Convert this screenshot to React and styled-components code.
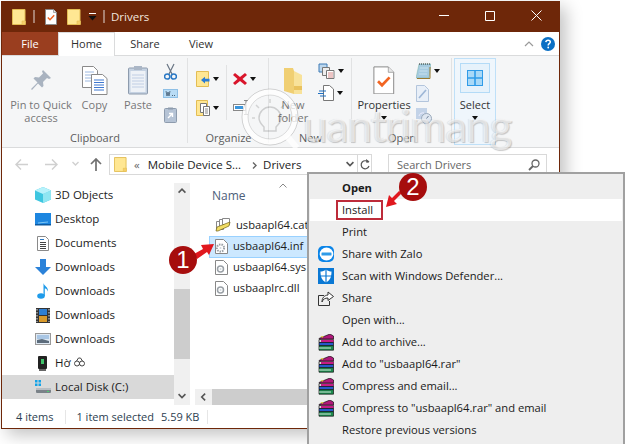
import React from "react";
import styled, { createGlobalStyle } from "styled-components";

const Global = createGlobalStyle`
  html, body { margin: 0; padding: 0; background: #fff; }
  body { font-family: "Open Sans", "Liberation Sans", sans-serif; font-size: 11px; color: #1c1c1c; }
`;

const Stage = styled.div`
  position: relative; width: 626px; height: 444px; overflow: hidden; background: #fff;
`;
const Win = styled.div`
  margin: 1px 0 0 1px; width: 559px; height: 428px; box-sizing: border-box;
  border: 1px solid #6e2709; border-top: 0; background: #fff;
  display: flex; flex-direction: column;
  box-shadow: 6px 6px 16px rgba(0,0,0,.24);
`;

/* title bar */
const TitleBar = styled.div`
  height: 31px; flex: none; background: #6e2709; display: flex; align-items: center; color: #f2e6df;
  font-size: 11.5px; padding-left: 10px;
`;
const TitleSlot = styled.span`display: inline-flex; margin-left: ${p => p.$ml || 0}px;`;
const TitleSep = styled.span`width: 2px; height: 13px; background: #a8806f; margin-left: ${p => p.$ml}px;`;
const TitleText = styled.span`margin-left: 6px;`;
const Controls = styled.div`margin-left: auto; display: flex; padding-bottom: 2px;`;
const Ctl = styled.span`width: 46px; height: 20px; display: flex; align-items: center; justify-content: center;`;

/* tabs */
const Tabs = styled.div`
  height: 24px; flex: none; box-sizing: border-box; display: flex; border-bottom: 1px solid #dadbdc; background: #fff;
`;
const FileTab = styled.div`
  width: 56px; background: #9a3e1f; color: #fff; text-align: center; line-height: 23px; height: 23px;
`;
const Tab = styled.div`
  width: ${p => p.$w}px; text-align: center; line-height: 23px; height: ${p => p.$active ? 24 : 23}px;
  box-sizing: border-box; color: #303030; background: #fff; ${p => p.$active && `border: 1px solid #dadbdc; border-bottom: 0; line-height: 22px;`}
`;
const TabRight = styled.div`margin-left: auto; display: flex; align-items: center; gap: 7px; padding-right: 4px;`;

/* ribbon */
const Ribbon = styled.div`
  height: 92px; flex: none; box-sizing: border-box; background: #f5f6f7; border-bottom: 1px solid #dadbdc; display: flex;
`;
const Group = styled.div`
  width: ${p => p.$w}px; flex: none; box-sizing: border-box; display: flex; flex-direction: column; position: relative;
  &::after { content: ""; position: absolute; right: 0; top: 2px; bottom: 4px; width: 1px; background: #e1e2e3; }
`;
const GroupBody = styled.div`flex: 1; display: flex; padding-left: ${p => p.$pl || 0}px;`;
const GroupLabel = styled.div`height: 20px; line-height: 22px; text-align: center; color: #5c5c5c; flex: none;`;
const Big = styled.div`
  width: ${p => p.$w}px; flex: none; display: flex; flex-direction: column; align-items: center; padding-top: 6px;
  color: ${p => p.$dim ? "#777" : "#333"}; line-height: 13px; text-align: center;
`;
const BigIcon = styled.div`height: 36px; display: flex; align-items: center; justify-content: center; flex: none;`;
const Stack = styled.div`
  display: flex; flex-direction: column; width: ${p => p.$w}px; flex: none;
  align-items: ${p => p.$center ? "center" : "flex-start"};
  padding-top: ${p => p.$pt}px; gap: ${p => p.$gap}px; margin-left: ${p => p.$ml || 0}px;
`;
const Small = styled.div`display: flex; align-items: center; gap: 3px; height: ${p => p.$h}px;`;
const Caret = styled.span`
  width: 0; height: 0; border: 3.5px solid transparent; border-top: 4px solid #111; border-bottom: 0; flex: none; display: inline-block;
  margin-top: ${p => p.$mt || 0}px;
`;
const VDiv = styled.div`width: 1px; height: 55px; background: #e1e2e3; margin: 9px 6px 0 4px; flex: none;`;
const SelectGroup = styled.div`
  width: 42px; margin: 2px 0 2px 2px; box-sizing: border-box; background: #eff6fc; border: 1px solid #bfe0f8;
  display: flex; flex-direction: column; align-items: center; padding-top: 4px; line-height: 13px; color: #333; flex: none;
`;
const SelectTile = styled.div`
  width: 30px; height: 30px; box-sizing: border-box; border: 1px solid #b3dbf7; background: #e6f2fb;
  display: flex; align-items: center; justify-content: center; margin-bottom: 5px;
`;

/* nav */
const Nav = styled.div`height: 35px; flex: none; display: flex; align-items: flex-start; padding: 6px 0 0 4px; box-sizing: border-box;`;
const NavBtn = styled.span`width: ${p => p.$w}px; height: 21px; display: flex; align-items: center; justify-content: center; flex: none;`;
const Address = styled.div`
  width: 263px; height: 21px; box-sizing: border-box; border: 1px solid #d9d9d9; margin-left: 1px; display: flex; align-items: center;
  padding-left: 4px; flex: none; color: #222; font-size: 11.5px;
`;
const Crumb = styled.span`margin-left: ${p => p.$ml}px; white-space: nowrap; color: ${p => p.$c || "inherit"};`;
const AddrEnd = styled.div`
  margin-left: auto; display: flex; align-items: center; height: 100%;
`;
const RefreshCell = styled.span`
  width: 13px; height: 100%; border-left: 1px solid #d9d9d9; display: flex; align-items: center; justify-content: center; margin-left: 3px;
`;
const Search = styled.div`
  width: 159px; height: 21px; margin-left: 16px; box-sizing: border-box; border: 1px solid #d9d9d9; display: flex; align-items: center;
  padding: 0 6px 0 8px; justify-content: space-between; color: #666; flex: none;
`;

/* main */
const Main = styled.div`flex: 1; display: flex; min-height: 0;`;
const Side = styled.div`width: 172px; flex: none; display: flex; flex-direction: column;`;
const SideItem = styled.div`
  height: 24px; flex: none; display: flex; align-items: center; padding-left: 32px; box-sizing: border-box;
  background: ${p => p.$on ? "#d9d9d9" : "transparent"}; color: #1c1c1c; font-size: 11.5px;
`;
const SideLabel = styled.span`position: relative; top: -1px; display: inline-flex; align-items: center; gap: 3px;`;
const SideIcon = styled.span`width: 17px; height: 18px; margin-right: 4px; display: flex; align-items: center; justify-content: center; flex: none;`;
const VScroll = styled.div`width: 16px; flex: none; background: #f0f0f0; display: flex; flex-direction: column; align-items: center;`;
const ScrollEnd = styled.span`height: 17px; flex: none; display: flex; align-items: center; justify-content: center;`;
const Track = styled.div`flex: 1; align-self: stretch; padding-top: 89px;`;
const Thumb = styled.div`height: 70px; background: #cdcdcd;`;
const Files = styled.div`flex: 1; min-width: 0; display: flex; flex-direction: column;`;
const FilesHead = styled.div`height: 32px; flex: none; display: flex; padding-left: 22px; color: #4c607a; line-height: 25px; font-size: 12px;`;
const SortMark = styled.span`margin: 0 0 0 33px; height: 8px; display: flex;`;
const FileRow = styled.div`
  height: ${p => p.$on ? 22 : 21}px; width: 120px; margin-left: 19px; display: flex; align-items: center; gap: 5px; padding: 0 0 ${p => p.$on ? 0 : 0}px 6px; box-sizing: border-box; flex: none;
  font-size: 11.2px; color: #1c1c1c; white-space: nowrap;
  margin-top: ${p => p.$on ? -0.5 : 0}px; margin-bottom: ${p => p.$on ? -0.5 : 0}px;
  background: ${p => p.$on ? "#cce8ff" : "transparent"}; box-shadow: ${p => p.$on ? "inset 0 0 0 1px #99d1ff" : "none"};
`;
const FileName = styled.span`position: relative; top: -1px;`;
const HScroll = styled.div`margin: auto 0 0 5px; height: 16px; background: #f0f0f0; display: flex; flex: none;`;
const HEnd = styled.span`width: 17px; flex: none; display: flex; align-items: center; justify-content: center;`;
const HThumb = styled.div`flex: 1; background: #cdcdcd;`;
const Status = styled.div`height: 23px; flex: none; display: flex; align-items: center; padding-left: 14px; color: #2c3e50; white-space: nowrap;`;
const StatusSep = styled.span`width: 1px; height: 14px; background: #e6e6e6; margin: 0 ${p => p.$r}px 0 ${p => p.$l}px;`;
const StatusSize = styled.span`margin-left: 7px;`;

/* overlays */
const Menu = styled.div`
  position: absolute; left: 307px; top: 172px; width: 318px; height: 300px; box-sizing: border-box;
  border: 2px solid #a0a0a0; background: #eeeeee; padding: 3px 1px 0; z-index: 3;
`;
const MenuRow = styled.div`
  height: 22px; display: flex; align-items: center; padding-left: 7px; position: relative; white-space: nowrap; color: #1a1a1a;
  background: ${p => p.$on ? "#fff" : "transparent"}; font-weight: ${p => p.$bold ? 700 : 400}; font-size: 11.2px;
`;
const MenuLabel = styled.span`position: relative; top: -1px;`;
const MenuIcon = styled.span`width: 18px; height: 18px; display: flex; align-items: center; justify-content: center; margin-right: 7px; flex: none;`;
const InstallBox = styled.span`
  position: absolute; left: 26px; top: 1px; width: 47px; height: 20px; box-sizing: border-box; border: 2px solid #bd2b3a;
`;
const Badge = styled.div`
  position: absolute; left: ${p => p.$x - 14}px; top: ${p => p.$y - 14}px; width: 28px; height: 28px; border-radius: 50%;
  background: #a60d0d; color: #fff; font: 400 24px/28px "Liberation Sans", sans-serif; text-align: center; z-index: 5;
`;
const Arrow = styled.svg`position: absolute; left: 0; top: 0; z-index: 4; pointer-events: none;`;
const Watermark = styled.div`position: absolute; left: 241px; top: 86px; z-index: 2; pointer-events: none; display: flex; align-items: flex-start;`;
const WmText = styled.span`
  font: 400 44px/48px Lato, sans-serif; color: rgba(255,255,255,.6); margin: 15px 0 0 2px; letter-spacing: -1px;
  text-shadow: 1px 1px 1px rgba(0,0,0,.2), -1px 0 1px rgba(0,0,0,.08);
`;

/* icons */
const Folder = ({ w = 14, h = 16 }) => (
  <svg width={w} height={h} viewBox="0 0 14 16">
    <path d="M.5.5h12.5v15H.5z" fill="#ffe793" stroke="#e3bd54" />
    <path d="M10 12h3.500v3.500H10z" fill="#f5cf6a" stroke="#e3bd54" strokeWidth=".6" />
  </svg>
);
const CheckDoc = ({ s = 1, color = "#f26522" }) => (
  <svg width={12 * s} height={16 * s} viewBox="0 0 12 16">
    <path d="M.5.5h8l3 3v12H.5z" fill="#fff" stroke="#8a8a8a" strokeWidth={1 / s} />
    <path d="M8.500.5v3h3" fill="#e8e8e8" stroke="#8a8a8a" strokeWidth={.7 / s} />
    <path d="M2.800 8.500l2.200 2.200 4.200-4.400" fill="none" stroke={color} strokeWidth={1.5} />
  </svg>
);
const Pin = () => (
  <svg width="22" height="22" viewBox="0 0 22 22"><path d="M13 1l8 8-2 1-2-1-4 4 .5 4-1.500 1.500-4-4L2 21l-1-1 6.500-6.500-4-4L5 8l4 .5 4-4-1-2z" fill="#a9b3c0" /></svg>
);
const CopyIcon = () => (
  <svg width="26" height="29" viewBox="0 0 26 29">
    <path d="M.5.5h11l4 4v17H.5z" fill="#fff" stroke="#8a8a8a" />
    <path d="M3 6h9M3 9h9M3 12h9M3 15h6" stroke="#9cb8e0" />
    <path d="M9.500 8.500h11l4.500 4v16H9.500z" fill="#fff" stroke="#8a8a8a" />
    <path d="M12 14h10M12 16.500h10M12 19h10M12 21.500h10M12 24h10" stroke="#3f78d0" />
  </svg>
);
const PasteIcon = () => (
  <svg width="20" height="30" viewBox="0 0 20 30">
    <rect x=".5" y="3" width="19" height="26" rx="1" fill="#c5d2e2" stroke="#8d9bad" />
    <rect x="2.500" y="6" width="15" height="21" fill="#eef2f7" />
    <path d="M4 10h12M4 13h12M4 16h12M4 19h12M4 22h12" stroke="#c0cee4" />
    <rect x="6" y="1" width="8" height="4" fill="#aab6c6" />
  </svg>
);
const Scissors = () => (
  <svg width="13" height="17" viewBox="0 0 13 17" fill="none">
    <path d="M3 1l5 10M10 1L5 11" stroke="#6a7685" strokeWidth="1.200" />
    <circle cx="3.200" cy="13.500" r="2.600" stroke="#2a78c4" strokeWidth="1.500" />
    <circle cx="9.800" cy="13.500" r="2.600" stroke="#2a78c4" strokeWidth="1.500" />
  </svg>
);
const PathIcon = () => (
  <svg width="15" height="9" viewBox="0 0 15 9">
    <rect x=".5" y=".5" width="14" height="8" fill="#b9dcf5" stroke="#8fc0e6" />
    <path d="M3 2l1 5 1-4 1 4 1-5" stroke="#33495f" strokeWidth=".7" fill="none" />
    <path d="M9 6.500h.8M11 6.500h.8" stroke="#33495f" />
  </svg>
);
const ShortcutIcon = () => (
  <svg width="13" height="16" viewBox="0 0 13 16">
    <rect x=".5" y="1.500" width="12" height="14" rx="1" fill="#b5c3d5" stroke="#8d9bad" />
    <rect x="4" y=".5" width="5" height="2" fill="#8d9bad" />
    <path d="M4 11l4-4M5 6.500h3.500V10" stroke="#fff" strokeWidth="1.400" fill="none" />
  </svg>
);
const MoveTo = () => (
  <svg width="14" height="16" viewBox="0 0 14 16">
    <path d="M.5.5h12v15H.5z" fill="#ffe793" stroke="#e3bd54" />
    <path d="M5 9l4-3.200v2H13.500v2.600H9v2z" fill="#2b7cd3" />
  </svg>
);
const CopyTo = () => (
  <svg width="14" height="16" viewBox="0 0 14 16">
    <path d="M.5.5h11v15H.5z" fill="#ffe793" stroke="#e3bd54" />
    <path d="M4.500 3.500h6v9h-6z" fill="#fff" stroke="#777" />
    <path d="M7.500 6.500h6v9h-6z" fill="#fff" stroke="#777" />
    <path d="M9 9h3M9 11h3M9 13h3" stroke="#8a8a8a" />
  </svg>
);
const Delete = () => (
  <svg width="14" height="14" viewBox="0 0 14 14"><path d="M2 1l5 4 5-4 2 2-4.500 4 4.500 4-2 2-5-4-5 4-2-2 4.500-4L0 3z" fill="#d9152b" /></svg>
);
const Rename = () => (
  <svg width="17" height="15" viewBox="0 0 17 15">
    <rect x=".5" y="4.500" width="12" height="6" fill="#fff" stroke="#888" />
    <rect x="2" y="6" width="8" height="3" fill="#3a96dd" />
    <path d="M11 .5h4M13 .5v14M11 14.500h4" stroke="#888" fill="none" />
  </svg>
);
const BigFolder = () => (
  <svg width="20" height="28" viewBox="0 0 20 28">
    <path d="M1 2h9l1 3v23L1 25z" fill="#f0cf73" />
    <path d="M1 2l10 3v23H19V9L11 5z" fill="#f8e29a" />
    <path d="M11 20h8v4h-8z" fill="#e9c25e" />
  </svg>
);
const NewItem = () => (
  <svg width="17" height="16" viewBox="0 0 17 16">
    <path d="M1 1h8v8H1z" fill="#bcd7ee" stroke="#3d7ab5" />
    <path d="M4.500 4.500h7v8h-7z" fill="#eee" stroke="#777" />
    <path d="M8.500 7.500h7.500v8H8.500z" fill="#fff" stroke="#777" />
    <path d="M10 10h5M10 12h5M10 14h5" stroke="#d98a8a" />
  </svg>
);
const EasyAccess = () => (
  <svg width="16" height="16" viewBox="0 0 16 16">
    <path d="M5.500.5h6l4 3.500v11.500h-10z" fill="#fff" stroke="#777" />
    <path d="M1 6h7M0 8.500h6M2 11h6" stroke="#1e6fc0" strokeWidth="1" />
  </svg>
);
const Notebook = () => (
  <svg width="15" height="16" viewBox="0 0 15 16">
    <path d="M3 1h12L13 15H0z" fill="#a6cbe0" stroke="#6a9" strokeWidth=".4" />
    <path d="M3 1h12" stroke="#333" strokeDasharray="1 1" />
    <path d="M14 4v11.500H1" stroke="#9a7a30" fill="none" />
    <path d="M4 5h8M3.500 8h8M3 11h8" stroke="#c9e1ee" />
  </svg>
);
const EditDoc = () => (
  <svg width="13" height="17" viewBox="0 0 13 17">
    <path d="M.5.5h8l4 4v12H.5z" fill="#e8eff8" stroke="#b3c5dc" />
    <path d="M3 13l7-8" stroke="#9db6d6" strokeWidth="1.600" />
  </svg>
);
const History = () => (
  <svg width="16" height="16" viewBox="0 0 16 16">
    <rect x="0" y="0" width="11" height="11" fill="#c3d3e8" />
    <circle cx="10.500" cy="10.500" r="5" fill="#dfe7f1" stroke="#9aa9bb" />
    <path d="M10.500 10.500l2-2.500" stroke="#70829a" />
    <path d="M3 8a4 4 0 0 1 5-3" stroke="#eef" fill="none" />
  </svg>
);
const Grid = () => (
  <svg width="16" height="16" viewBox="0 0 16 16">
    <rect width="16" height="16" fill="#2f9be8" />
    <path d="M1 1h6.200v6.200H1zM8.800 1H15v6.200H8.800zM1 8.800h6.200V15H1zM8.800 8.800H15V15H8.800z" fill="#a9d9f7" />
  </svg>
);
const NavArrow = styled.svg`transform: ${p => p.$flip ? "scaleX(-1)" : "none"};`;
const LeftArrow = ({ c, flip }) => (
  <NavArrow $flip={flip} width="13" height="11" viewBox="0 0 13 11">
    <path d="M6 .5l-5 5 5 5M1 5.500h12" fill="none" stroke={c} strokeWidth="1.500" />
  </NavArrow>
);
const Chevron = ({ c = "#888", dir = "down", s = 7 }) => {
  const d = { down: "M.5 1l3 3 3-3", up: "M.5 4l3-3 3 3", left: "M4.500 .5L1.500 3.500l3 3", right: "M2 .5l3 3-3 3" }[dir];
  return <svg width={s} height={s} viewBox="0 0 7 7"><path d={d} fill="none" stroke={c} strokeWidth="1.400" /></svg>;
};
const Cube = () => (
  <svg width="16" height="16" viewBox="0 0 16 16">
    <path d="M8 0l8 3.500v9L8 16l-8-3.500v-9z" fill="#3ec6e0" />
    <path d="M8 7l8-3.500v9L8 16z" fill="#8fe6f2" />
    <path d="M8 0l8 3.500L8 7 0 3.500z" fill="#b8f2fb" />
  </svg>
);
const Desktop = () => (
  <svg width="16" height="13" viewBox="0 0 16 13">
    <rect width="16" height="11" fill="#1d86e0" />
    <rect y="11" width="16" height="1.500" fill="#0d5aa0" />
    <path d="M3 10l10-1" stroke="#7cc6f5" />
  </svg>
);
const Docs = () => (
  <svg width="12" height="15" viewBox="0 0 12 15">
    <path d="M.5.5h8l3 3v11H.5z" fill="#fff" stroke="#8a8a8a" />
    <path d="M3 3.500h4" stroke="#2a78c4" />
    <path d="M3 6.500h6M3 8.500h6M3 10.500h6M3 12.500h6" stroke="#444" />
  </svg>
);
const Download = () => (
  <svg width="16" height="16" viewBox="0 0 16 16"><path d="M5 0h6v8h5l-8 8-8-8h5z" fill="#2b82d9" /></svg>
);
const Music = () => (
  <svg width="12" height="16" viewBox="0 0 12 16">
    <ellipse cx="4" cy="13" rx="3.800" ry="2.800" fill="#1f9bea" />
    <path d="M6.500 13V0c.5 3 5 4 4.500 8.500C10 6 8.500 5.500 7.800 5.500V13z" fill="#1f9bea" />
  </svg>
);
const Film = () => (
  <svg width="14" height="15" viewBox="0 0 14 15">
    <rect width="14" height="15" fill="#333" />
    <rect x="3" y="1" width="8" height="6" fill="#2f7fd1" />
    <rect x="3" y="8" width="8" height="6" fill="#d99a2b" />
    <path d="M1 1v1.500M1 4v1.500M1 7v1.500M1 10v1.500M1 13v1M13 1v1.500M13 4v1.500M13 7v1.500M13 10v1.500M13 13v1" stroke="#ddd" />
  </svg>
);
const Picture = () => (
  <svg width="16" height="12" viewBox="0 0 16 12">
    <rect x=".5" y=".5" width="15" height="11" fill="#dfe9f3" stroke="#999" />
    <rect x="2" y="2" width="12" height="4" fill="#a9c6e4" />
    <path d="M2 7l5-1 7 2v2H2z" fill="#5c6c7c" />
  </svg>
);
const Device = () => (
  <svg width="9" height="15" viewBox="0 0 9 15">
    <rect width="9" height="13" rx="1" fill="#222" />
    <rect x="3" y="3" width="3" height="5" fill="#3fc36a" />
    <rect x="1" y="13" width="7" height="2" fill="#666" />
  </svg>
);
const Disk = () => (
  <svg width="16" height="14" viewBox="0 0 16 14">
    <path d="M0 0h2.500v2.500H0zM3.500 0H6v2.500H3.500zM0 3.500h2.500V6H0zM3.500 3.500H6V6H3.500z" fill="#12a3e8" />
    <rect x="1" y="9" width="15" height="4" rx="1" fill="#7a8288" />
    <rect x="1" y="8" width="15" height="2" fill="#b8bec3" />
    <rect x="12" y="11" width="2" height="1" fill="#4bd36f" />
  </svg>
);
const Glasses = () => (
  <svg width="11" height="10" viewBox="0 0 11 10" fill="none" stroke="#333" strokeWidth=".9">
    <circle cx="3" cy="6.500" r="2.500" />
    <circle cx="8" cy="6.500" r="2.500" />
    <path d="M2.500 4l2-3h2l2 3" />
  </svg>
);
const Cat = () => (
  <svg width="16" height="15" viewBox="0 0 16 15">
    <path d="M1.500 3.500h7v8h-7z" fill="#fff" stroke="#888" />
    <path d="M4.500 1.500h7v7h-7z" fill="#fff" stroke="#888" />
    <path d="M7.500.5h7v6h-7z" fill="#fff" stroke="#888" />
    <path d="M2 9l13-5-1 4-11 5H1z" fill="#f2dd63" stroke="#6e601a" strokeWidth=".7" />
  </svg>
);
const GearDoc = ({ big }) => (
  <svg width="13" height="15" viewBox="0 0 13 15">
    <path d="M.5.500h8l4 4v10H.5z" fill="#fff" stroke="#888" />
    <circle cx="5.500" cy="9" r={big ? 3.600 : 3} fill="none" stroke="#9aa0a6" strokeWidth={big ? 2 : 1.500} strokeDasharray={big ? "1.500 1" : "none"} />
    <circle cx="5.500" cy="9" r="1" fill="#cfd6dc" />
  </svg>
);
const Zalo = () => (
  <svg width="16" height="16" viewBox="0 0 16 16">
    <rect width="16" height="16" rx="5" fill="#0a84e8" />
    <ellipse cx="8.500" cy="8" rx="6.800" ry="6.500" fill="#fff" />
    <rect x="3.500" y="6.500" width="10" height="3" rx=".5" fill="#2f9be8" />
  </svg>
);
const Shield = () => (
  <svg width="16" height="16" viewBox="0 0 16 16">
    <rect width="16" height="16" fill="#0a78d4" />
    <path d="M8 1.500c2 1.500 3.500 2 5.500 2 0 5-1 8.500-5.500 11-4.500-2.500-5.500-6-5.500-11 2 0 3.500-.5 5.500-2z" fill="#fff" />
    <path d="M8 1v14M2 8h12" stroke="#0a78d4" strokeWidth="1.200" />
  </svg>
);
const ShareIc = () => (
  <svg width="16" height="15" viewBox="0 0 16 15" fill="none" stroke="#333">
    <path d="M6 4.500H.5v10h11V10" />
    <path d="M10 1l5.500 4.500-5.500 4V7c-3 0-5 1-6 4 0-4 2-6.500 6-7z" fill="#fff" />
  </svg>
);
const Rar = () => (
  <svg width="16" height="17" viewBox="0 0 16 17">
    <path d="M1 4.500L12 0l3.500 2v3H1.500z" fill="#b0177a" stroke="#111" strokeWidth=".7" />
    <path d="M1 5.500h14.500v3H1z" fill="#d8d8d8" stroke="#111" strokeWidth=".7" />
    <path d="M3 5.800h12.500v2.400H3z" fill="#c61b85" />
    <path d="M1 8.500h14.500v3.200H1z" fill="#2659c9" stroke="#111" strokeWidth=".7" />
    <path d="M1 11.700h14.500v4.500H1z" fill="#1c8c4e" stroke="#111" strokeWidth=".7" />
    <path d="M1 14h12" stroke="#fff" strokeWidth=".8" />
    <path d="M2.500 2l3.500.5-2 1.500z" fill="#e9c53a" />
  </svg>
);

const sideItems = [
  [Cube, "3D Objects"], [Desktop, "Desktop"], [Docs, "Documents"], [Download, "Downloads"],
  [Music, "Downloads"], [Film, "Downloads"], [Picture, "Downloads"], [Device, <>Hờ <Glasses /></>],
];
const files = [
  [<Cat />, "usbaapl64.cat"], [<GearDoc big />, "usbaapl64.inf", true], [<GearDoc />, "usbaapl64.sys"], [<GearDoc />, "usbaaplrc.dll"],
];
const menu = [
  [null, "Open", { bold: true }], [null, "Install", { on: true }], [null, "Print"], [Zalo, "Share with Zalo"],
  [Shield, "Scan with Windows Defender..."], [ShareIc, "Share"], [null, "Open with..."], [Rar, "Add to archive..."],
  [Rar, 'Add to "usbaapl64.rar"'], [Rar, "Compress and email..."], [Rar, 'Compress to "usbaapl64.rar" and email'], [null, "Restore previous versions"],
];

const Bulb = () => (
  <svg width="60" height="66" viewBox="0 0 60 66" fill="none">
    <circle cx="29" cy="31" r="25" stroke="rgba(255,255,255,.75)" strokeWidth="6" />
    <circle cx="29" cy="31" r="28" stroke="rgba(0,0,0,.16)" strokeWidth="1" />
    <circle cx="29" cy="31" r="22" stroke="rgba(0,0,0,.12)" strokeWidth="1" />
    <path d="M23 41c-3-3-5-5-5-9a11 11 0 0 1 22 0c0 4-2 6-5 9v4H23z" stroke="rgba(0,0,0,.16)" strokeWidth="1.500" />
    <path d="M46 50l10 12" stroke="rgba(255,255,255,.75)" strokeWidth="6" />
    <path d="M29 13v4M15 19l3 3M43 19l-3 3M11 32h3M44 32h3" stroke="rgba(0,0,0,.14)" strokeWidth="1.500" />
  </svg>
);

export default function App() {
  return (
    <Stage>
      <Global />
      <Win>
        <TitleBar>
          <TitleSlot><Folder /></TitleSlot>
          <TitleSep $ml={7} />
          <TitleSlot $ml={10}><CheckDoc /></TitleSlot>
          <TitleSlot $ml={10}><Folder /></TitleSlot>
          <TitleSlot $ml={7}>
            <svg width="9" height="8" viewBox="0 0 9 8"><path d="M1 .5h7" stroke="#fff" /><path d="M.5 3h8L4.500 7.500z" fill="#111" /></svg>
          </TitleSlot>
          <TitleSep $ml={6} />
          <TitleText>Drivers</TitleText>
          <Controls>
            <Ctl><svg width="10" height="2" viewBox="0 0 10 2"><path d="M0 .5h10" stroke="#fff" /></svg></Ctl>
            <Ctl><svg width="10" height="10" viewBox="0 0 10 10"><path d="M.5.5h9v9h-9z" fill="none" stroke="#fff" /></svg></Ctl>
            <Ctl><svg width="11" height="11" viewBox="0 0 11 11"><path d="M.5.5l10 10M10.500.5l-10 10" stroke="#fff" /></svg></Ctl>
          </Controls>
        </TitleBar>

        <Tabs>
          <FileTab>File</FileTab>
          <Tab $w={57} $active>Home</Tab>
          <Tab $w={60}>Share</Tab>
          <Tab $w={52}>View</Tab>
          <TabRight>
            <svg width="10" height="7" viewBox="0 0 10 7"><path d="M1 6l4-4 4 4" fill="none" stroke="#9a9a9a" strokeWidth="1.200" /></svg>
            <svg width="14" height="14" viewBox="0 0 14 14"><circle cx="7" cy="7" r="7" fill="#0a6fc4" /><path d="M4.800 5.200C5 3.800 6 3.200 7.100 3.200c1.300 0 2.200.8 2.200 1.900 0 1.600-2.100 1.600-2.100 3.300" fill="none" stroke="#fff" strokeWidth="1.500" /><circle cx="7.200" cy="10.500" r=".9" fill="#fff" /></svg>
          </TabRight>
        </Tabs>

        <Ribbon>
          <Group $w={186}>
            <GroupBody $pl={8}>
              <Big $w={62} $dim><BigIcon><Pin /></BigIcon>Pin to Quick access</Big>
              <Big $w={45} $dim><BigIcon><CopyIcon /></BigIcon>Copy</Big>
              <Big $w={42} $dim><BigIcon><PasteIcon /></BigIcon>Paste</Big>
              <Stack $w={22} $center $pt={7} $gap={9}>
                <Small $h={17}><Scissors /></Small>
                <Small $h={9}><PathIcon /></Small>
                <Small $h={16}><ShortcutIcon /></Small>
              </Stack>
            </GroupBody>
            <GroupLabel>Clipboard</GroupLabel>
          </Group>
          <Group $w={81}>
            <GroupBody $pl={8}>
              <Stack $w={26} $pt={15} $gap={13}>
                <Small $h={16}><MoveTo /><Caret /></Small>
                <Small $h={16}><CopyTo /><Caret /></Small>
              </Stack>
              <VDiv />
              <Stack $w={32} $pt={16} $gap={14}>
                <Small $h={14}><Delete /><Caret /></Small>
                <Small $h={15}><Rename /></Small>
              </Stack>
            </GroupBody>
            <GroupLabel>Organize</GroupLabel>
          </Group>
          <Group $w={83}>
            <GroupBody $pl={4}>
              <Big $w={40} $dim><BigIcon><BigFolder /></BigIcon>New folder</Big>
              <Stack $w={30} $ml={5} $pt={6} $gap={6}>
                <Small $h={17}><NewItem /><Caret /></Small>
                <Small $h={16}><EasyAccess /><Caret /></Small>
              </Stack>
            </GroupBody>
            <GroupLabel>New</GroupLabel>
          </Group>
          <Group $w={100}>
            <GroupBody $pl={2}>
              <Big $w={60}>
                <BigIcon><CheckDoc s={1.8} /></BigIcon>
                Properties
                <Caret $mt={5} />
              </Big>
              <Stack $w={30} $ml={2} $pt={6} $gap={6}>
                <Small $h={17}><Notebook /><Caret /></Small>
                <Small $h={17}><EditDoc /></Small>
                <Small $h={16}><History /></Small>
              </Stack>
            </GroupBody>
            <GroupLabel>Open</GroupLabel>
          </Group>
          <SelectGroup>
            <SelectTile><Grid /></SelectTile>
            Select
            <Caret $mt={5} />
          </SelectGroup>
        </Ribbon>

        <Nav>
          <NavBtn $w={30}><LeftArrow c="#d0d0d0" /></NavBtn>
          <NavBtn $w={30}><LeftArrow c="#d0d0d0" flip /></NavBtn>
          <NavBtn $w={18}><Chevron c="#d0d0d0" /></NavBtn>
          <NavBtn $w={24}>
            <svg width="12" height="13" viewBox="0 0 12 13"><path d="M1 6l5-5 5 5M6 1v12" fill="none" stroke="#707070" strokeWidth="1.700" /></svg>
          </NavBtn>
          <Address>
            <Folder w={13} h={15} />
            <Crumb $ml={7} $c="#666">«</Crumb>
            <Crumb $ml={8}>Mobile Device S...</Crumb>
            <Crumb $ml={10}><Chevron c="#666" dir="right" /></Crumb>
            <Crumb $ml={5}>Drivers</Crumb>
            <AddrEnd>
              <Chevron c="#555" s={8} />
              <RefreshCell>
                <svg width="10" height="11" viewBox="0 0 10 11" fill="none"><path d="M8.500 3.500A4 4 0 1 0 9 7" stroke="#555" strokeWidth="1.200" /><path d="M6 0l.5 4 3-1.500z" fill="#555" /></svg>
              </RefreshCell>
            </AddrEnd>
          </Address>
          <Search>
            Search Drivers
            <svg width="12" height="12" viewBox="0 0 12 12" fill="none"><circle cx="7.500" cy="4.500" r="3.500" stroke="#666" strokeWidth="1.300" /><path d="M5 7l-4 4" stroke="#666" strokeWidth="1.800" /></svg>
          </Search>
        </Nav>

        <Main>
          <Side>
            {sideItems.map(([I, t], i) => (
              <SideItem key={i}><SideIcon><I /></SideIcon><SideLabel>{t}</SideLabel></SideItem>
            ))}
            <SideItem $on><SideIcon><Disk /></SideIcon><SideLabel>Local Disk (C:)</SideLabel></SideItem>
          </Side>
          <VScroll>
            <ScrollEnd><Chevron c="#555" dir="up" s={8} /></ScrollEnd>
            <Track><Thumb /></Track>
            <ScrollEnd><Chevron c="#555" s={8} /></ScrollEnd>
          </VScroll>
          <Files>
            <FilesHead>
              Name
              <SortMark><svg width="8" height="5" viewBox="0 0 8 5"><path d="M.5 4.500L4 1l3.500 3.500" fill="none" stroke="#888" /></svg></SortMark>
            </FilesHead>
            {files.map(([ic, t, on]) => (
              <FileRow key={t} $on={on}>{ic}<FileName>{t}</FileName></FileRow>
            ))}
            <HScroll>
              <HEnd><Chevron c="#555" dir="left" s={8} /></HEnd>
              <HThumb />
            </HScroll>
          </Files>
        </Main>

        <Status>
          4 items
          <StatusSep $l={12} $r={10} />
          1 item selected
          <StatusSize>5.59 KB</StatusSize>
          <StatusSep $l={8} $r={0} />
        </Status>
      </Win>

      <Watermark>
        <Bulb />
        <WmText>uantrimang</WmText>
      </Watermark>

      <Menu>
        {menu.map(([I, t, o = {}]) => (
          <MenuRow key={t} $on={o.on} $bold={o.bold}>
            <MenuIcon>{I && <I />}</MenuIcon>
            <MenuLabel>{t}</MenuLabel>
            {o.on && <InstallBox />}
          </MenuRow>
        ))}
      </Menu>

      <Arrow width="626" height="444" viewBox="0 0 626 444">
        <path d="M194 254l9-5-2-4 13-1-5 11-2-3-10 7z" fill="#e0181f" />
        <path d="M402 193l-8 8 3 3-11 3 3-12 3 3 7-7z" fill="#e0181f" />
      </Arrow>
      <Badge $x={183} $y={260}>1</Badge>
      <Badge $x={413} $y={187}>2</Badge>
    </Stage>
  );
}
